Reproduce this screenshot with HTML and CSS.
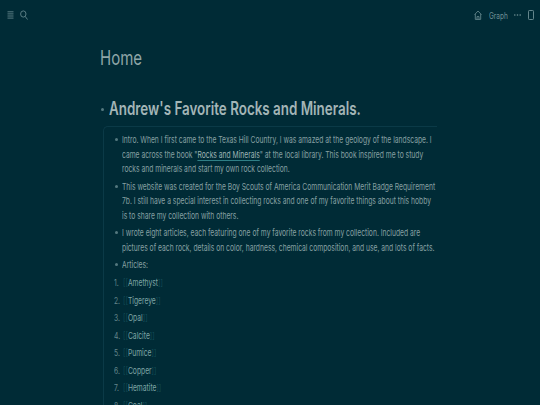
FILE: index.html
```html
<!DOCTYPE html>
<html>
<head>
  <meta name="viewport" content="width=device-width, initial-scale=1.0">
  <link rel="stylesheet" href="styles.css">
</head>
<body>
<div id="top_bar">
  <div class="bar_group">
    <svg class="icon" width="7" height="8" viewBox="0 0 7 8"><path d="M0.5 0.8h6M0.5 2.9h6M0.5 5h6M0.5 7.1h6" stroke="#6f9196" stroke-width="0.8" fill="none"/></svg>
    <svg class="icon" width="8" height="10" viewBox="0 0 8 10"><ellipse cx="3.3" cy="4" rx="2.7" ry="3.1" stroke="#6f9196" stroke-width="0.8" fill="none"/><path d="M5.2 6.4L7.5 9.5" stroke="#6f9196" stroke-width="0.8" fill="none"/></svg>
  </div>
  <div class="bar_group right_group">
    <svg class="icon" width="8" height="10" viewBox="0 0 8 10"><path d="M0.6 4.6L4 1l3.4 3.6M1.3 4v5.4h5.4V4M3 9.4V6.6h2v2.8" stroke="#6f9196" stroke-width="0.8" fill="none"/></svg>
    <div class="graph_label"><span class="squeeze">Graph</span></div>
    <svg class="icon" width="7" height="4" viewBox="0 0 7 4"><circle cx="0.8" cy="2" r="0.8" fill="#6f9196"/><circle cx="3.5" cy="2" r="0.8" fill="#6f9196"/><circle cx="6.2" cy="2" r="0.8" fill="#6f9196"/></svg>
    <svg class="icon" width="6" height="10" viewBox="0 0 6 10"><rect x="0.5" y="0.5" width="5" height="9" rx="0.8" stroke="#6f9196" stroke-width="0.9" fill="none"/></svg>
  </div>
</div>

<div id="main">
  <h1 class="page_title squeeze">Home</h1>

  <div class="top_block">
    <span class="dot top_dot"></span>
    <h2 class="squeeze">Andrew's Favorite Rocks and Minerals.</h2>
  </div>

  <div class="children">
    <div class="block">
      <span class="dot"></span>
      <p class="squeeze">Intro. When I first came to the Texas Hill Country, I was amazed at the geology of the landscape. I came across the book "<a class="page_link">Rocks and Minerals</a>" at the local library. This book inspired me to study rocks and minerals and start my own rock collection.</p>
    </div>
    <div class="block">
      <span class="dot"></span>
      <p class="squeeze">This website was created for the Boy Scouts of America Communication Merit Badge Requirement 7b. I still have a special interest in collecting rocks and one of my favorite things about this hobby is to share my collection with others.</p>
    </div>
    <div class="block">
      <span class="dot"></span>
      <p class="squeeze">I wrote eight articles, each featuring one of my favorite rocks from my collection. Included are pictures of each rock, details on color, hardness, chemical composition, and use, and lots of facts.</p>
    </div>
    <div class="block last_block">
      <span class="dot"></span>
      <p class="squeeze">Articles:</p>
    </div>
    <div class="num_row"><span class="num"><span class="squeeze">1.</span></span><span class="squeeze"><span class="br">[[</span><span class="art">Amethyst</span><span class="br">]]</span></span></div>
    <div class="num_row"><span class="num"><span class="squeeze">2.</span></span><span class="squeeze"><span class="br">[[</span><span class="art">Tigereye</span><span class="br">]]</span></span></div>
    <div class="num_row"><span class="num"><span class="squeeze">3.</span></span><span class="squeeze"><span class="br">[[</span><span class="art">Opal</span><span class="br">]]</span></span></div>
    <div class="num_row"><span class="num"><span class="squeeze">4.</span></span><span class="squeeze"><span class="br">[[</span><span class="art">Calcite</span><span class="br">]]</span></span></div>
    <div class="num_row"><span class="num"><span class="squeeze">5.</span></span><span class="squeeze"><span class="br">[[</span><span class="art">Pumice</span><span class="br">]]</span></span></div>
    <div class="num_row"><span class="num"><span class="squeeze">6.</span></span><span class="squeeze"><span class="br">[[</span><span class="art">Copper</span><span class="br">]]</span></span></div>
    <div class="num_row"><span class="num"><span class="squeeze">7.</span></span><span class="squeeze"><span class="br">[[</span><span class="art">Hematite</span><span class="br">]]</span></span></div>
    <div class="num_row"><span class="num"><span class="squeeze">8.</span></span><span class="squeeze"><span class="br">[[</span><span class="art">Coal</span><span class="br">]]</span></span></div>
  </div>
</div>
</body>
</html>
```
FILE: styles.css
```css
html, body {
  height: 100%;
}
body {
  margin: 0;
  overflow: hidden;
  background-color: #002b36;
  color: #93a8ab;
  font-family: Inter, "Liberation Sans", sans-serif;
}

/* the text in the shot is narrow, so squeeze it sideways */
.squeeze {
  display: block;
  flex: none;
  transform: scaleX(0.725);
  transform-origin: left top;
}

#top_bar {
  display: flex;
  justify-content: space-between;
  align-items: center;
  height: 30px;
  padding: 0 6px 0 7px;
}
.bar_group {
  display: flex;
  align-items: center;
  gap: 6px;
}
.right_group {
  gap: 7px;
}
.graph_label {
  width: 17px;
  margin-right: 1px;
  font-size: 9px;
  white-space: nowrap;
  color: #6f9196;
}

#main {
  width: 337px;
  margin-left: 100px;
}
.page_title {
  margin: 16px 0 0;
  font-size: 20px;
  line-height: 25px;
  font-weight: 400;
  white-space: nowrap;
  color: #8fa6a8;
  transform: scaleX(0.75);
}

.top_block {
  display: flex;
  align-items: center;
  margin-top: 26px;
}
.top_block h2 {
  margin: 0;
  font-size: 18px;
  line-height: 24px;
  font-weight: 600;
  color: #a3b5b6;
  white-space: nowrap;
  transform: scaleX(0.745);
}
.dot {
  width: 3px;
  height: 3px;
  border-radius: 50%;
  flex: none;
  background-color: #54787f;
}
.top_dot {
  margin: 0 5px 0 1px;
}

.children {
  margin: 5px 0 0 3px;
  border-top: 1px solid #0b3a47;
  border-left: 1px solid #0b3a47;
  border-top-left-radius: 5px;
  padding: 6px 0 0 10px;
}
.block {
  display: flex;
  margin-bottom: 3px;
}
.last_block {
  margin-bottom: 1.5px;
}
.block .dot {
  margin: 5px 4px 0 1px;
}
.block p {
  width: 434.5px;
  margin: 0;
  font-size: 9.3px;
  line-height: 14.5px;
  color: #87a0a2;
}
.page_link {
  color: #9fb4b5;
  border-bottom: 1px solid #2f7f86;
}

.num_row {
  display: flex;
  align-items: center;
  height: 17.5px;
  font-size: 9.3px;
  white-space: nowrap;
  color: #8ba2a4;
}
.num {
  width: 9px;
  color: #65878c;
}
.br {
  color: #114a55;
}
.art {
  color: #7fa5a5;
}
```
